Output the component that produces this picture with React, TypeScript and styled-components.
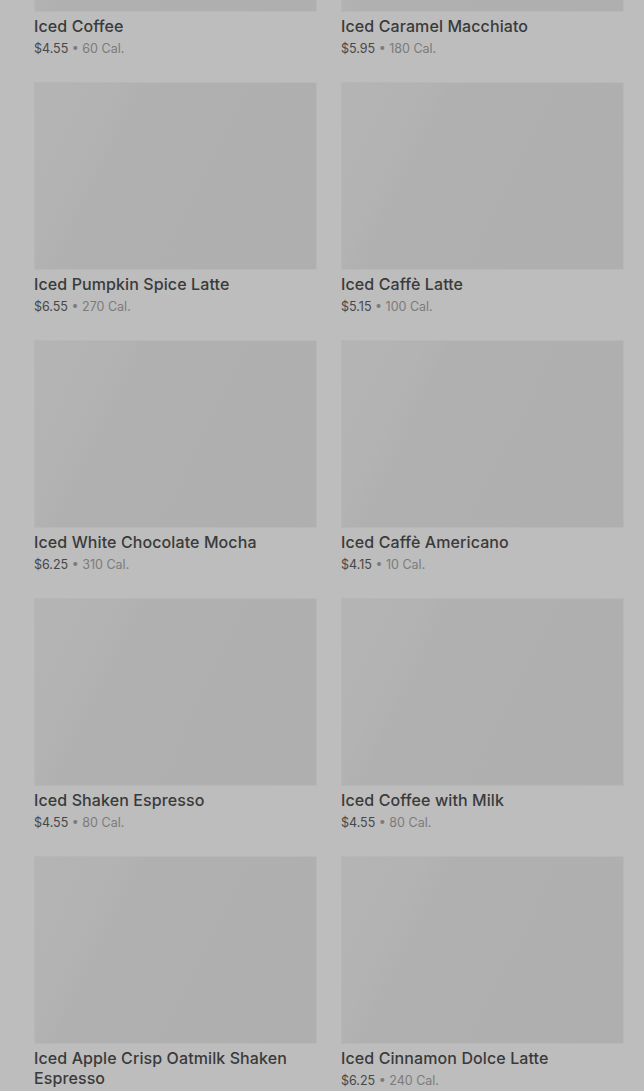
import React from 'react';
import styled, { createGlobalStyle } from 'styled-components';

const GlobalStyle = createGlobalStyle`
  html, body {
    margin: 0;
    padding: 0;
    background: #bdbdbd;
    overflow: hidden;
  }

  body {
    font-family: Inter, "Noto Sans", "Liberation Sans", sans-serif;
  }
`;

const Page = styled.div`
  height: 1091px;
  overflow: hidden;
  background: #bdbdbd;
`;

const Grid = styled.div`
  display: grid;
  grid-template-columns: 283px 283px;
  column-gap: 24px;
  row-gap: 23px;
  padding: 0 20px 0 34px;
  margin-top: -176px;
`;

const Card = styled.div`
  display: flex;
  flex-direction: column;
`;

const Thumb = styled.div`
  height: 186px;
  border: 1px solid #b7b7b7;
  background: linear-gradient(116deg, #b4b4b4 0%, #b3b3b3 22%, #b0b0b0 30%, #afafaf 100%);
  margin-bottom: 4px;
`;

const Title = styled.div`
  font-size: 16px;
  line-height: 20px;
  font-weight: 500;
  color: #3a3a3a;
  letter-spacing: 0.1px;
  margin-bottom: 3px;
`;

const Meta = styled.div`
  font-size: 12.5px;
  line-height: 20px;
  color: #7b7b7b;
`;

const Price = styled.span`
  color: #474747;
`;

type Item = {
  name: string,
  price: string,
  cal: number,
};

const items: Item[] = [
  { name: 'Iced Coffee', price: '$4.55', cal: 60 },
  { name: 'Iced Caramel Macchiato', price: '$5.95', cal: 180 },
  { name: 'Iced Pumpkin Spice Latte', price: '$6.55', cal: 270 },
  { name: 'Iced Caffè Latte', price: '$5.15', cal: 100 },
  { name: 'Iced White Chocolate Mocha', price: '$6.25', cal: 310 },
  { name: 'Iced Caffè Americano', price: '$4.15', cal: 10 },
  { name: 'Iced Shaken Espresso', price: '$4.55', cal: 80 },
  { name: 'Iced Coffee with Milk', price: '$4.55', cal: 80 },
  { name: 'Iced Apple Crisp Oatmilk Shaken Espresso', price: '$6.45', cal: 240 },
  { name: 'Iced Cinnamon Dolce Latte', price: '$6.25', cal: 240 },
];

const MenuCard = ({ name, price, cal }: Item) => (
  <Card>
    <Thumb />
    <Title>{name}</Title>
    <Meta>
      <Price>{price}</Price> • {cal} Cal.
    </Meta>
  </Card>
);

const App = () => (
  <Page>
    <GlobalStyle />
    <Grid>
      {items.map((item) => <MenuCard key={item.name} {...item} />)}
    </Grid>
  </Page>
);

export default App;
